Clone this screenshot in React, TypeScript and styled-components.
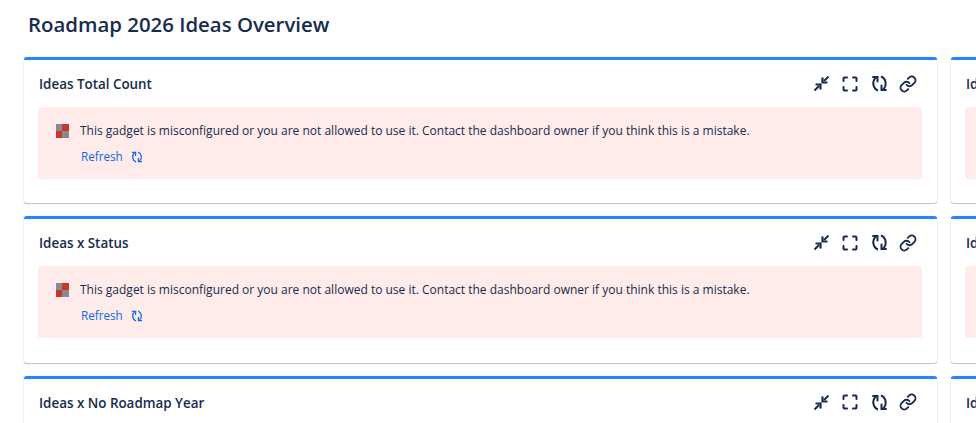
import React from 'react';
import styled, { createGlobalStyle } from 'styled-components';
import { Link } from 'lucide-react';

const GlobalStyle = createGlobalStyle`
  html, body {
    margin: 0;
    padding: 0;
    height: 100%;
    overflow: hidden;
    background: #fff;
    font-family: "Open Sans", "Noto Sans", "Liberation Sans", sans-serif;
    color: #172b4d;
  }
`;

const Page = styled.div`
  width: 976px;
  height: 423px;
  overflow: hidden;
  background: #fff;
`;

const Title = styled.h1`
  margin: 0;
  padding: 10px 0 0 28px;
  height: 57px;
  box-sizing: border-box;
  font-size: 20.4px;
  line-height: 28px;
  font-weight: 600;
  color: #172b4d;
  white-space: nowrap;
`;

const Grid = styled.div`
  display: grid;
  grid-template-columns: 913px 913px;
  column-gap: 14px;
  row-gap: 13.1px;
  padding-left: 24px;
`;

const Card = styled.section`
  height: 146.25px;
  box-sizing: border-box;
  background: #fff;
  border-top: 3px solid #2684ff;
  border-radius: 3px;
  box-shadow: 0 1px 1px rgba(9, 30, 66, 0.25), 0 0 1px rgba(9, 30, 66, 0.31);
  padding: 0 15px 0 14px;
`;

const CardHeader = styled.header`
  display: flex;
  align-items: center;
  justify-content: space-between;
  height: 47px;
  box-sizing: border-box;
`;

const CardTitle = styled.h2`
  margin: 1px 0 0 1px;
  font-size: 13.4px;
  font-weight: 600;
  color: #172b4d;
  white-space: nowrap;
`;

const Actions = styled.div`
  display: flex;
  align-items: center;
  gap: 11px;
  padding-right: 5px;
`;

const ActionButton = styled.span`
  display: flex;
  align-items: center;
  justify-content: center;
  width: 18px;
  height: 18px;
  color: #172b4d;
`;

const Alert = styled.div`
  display: flex;
  gap: 11px;
  height: 72px;
  box-sizing: border-box;
  padding: 15px 18px;
  background: #ffebe9;
  border-radius: 3px;
`;

const Message = styled.div`
  font-size: 12px;
  line-height: 17px;
  color: #172b4d;
`;

const RefreshLink = styled.a`
  display: flex;
  align-items: center;
  gap: 8px;
  margin: 9px 0 0 1px;
  font-size: 11.7px;
  color: #0b6be8;
`;

const BrokenIcon = styled.svg`
  flex: none;
  width: 13px;
  height: 14px;
  margin-top: 2px;
`;

const CompressIcon = () => (
  <svg width="17" height="17" viewBox="0 0 17 17" fill="none" stroke="currentColor" strokeWidth="2">
    <path d="M1.5 15.5L6 11" />
    <path d="M2.5 9.5H7.5V14.5" strokeWidth="2.2" />
    <path d="M15.5 1.5L11 6" />
    <path d="M9.5 2.5V7.5H14.5" strokeWidth="2.2" />
  </svg>
);

const ExpandIcon = () => (
  <svg width="16" height="16" viewBox="0 0 16 16" fill="none" stroke="currentColor" strokeWidth="2" strokeLinecap="round" strokeLinejoin="round">
    <path d="M1.5 5V2.5A1 1 0 0 1 2.5 1.5H5" />
    <path d="M11 1.5H13.5A1 1 0 0 1 14.5 2.5V5" />
    <path d="M14.5 11V13.5A1 1 0 0 1 13.5 14.5H11" />
    <path d="M5 14.5H2.5A1 1 0 0 1 1.5 13.5V11" />
  </svg>
);

const SyncIcon = ({ size, weight = 2 }: { size: number; weight?: number }) => (
  <svg width={size} height={size} viewBox="0 0 16 17" fill="none" stroke="currentColor" strokeWidth={weight}>
    <g>
      <path d="M6.5 15.5C1.5 13.5 0 6.5 4.5 2.5" />
      <path d="M0.8 2H6V7.2" />
    </g>
    <g transform="rotate(180 8 8.5)">
      <path d="M6.5 15.5C1.5 13.5 0 6.5 4.5 2.5" />
      <path d="M0.8 2H6V7.2" />
    </g>
  </svg>
);

const Gadget = ({ title }: { title: string }) => (
  <Card>
    <CardHeader>
      <CardTitle>{title}</CardTitle>
      <Actions>
        <ActionButton><CompressIcon /></ActionButton>
        <ActionButton><ExpandIcon /></ActionButton>
        <ActionButton><SyncIcon size={17} /></ActionButton>
        <ActionButton><Link size={18} strokeWidth={2.5} /></ActionButton>
      </Actions>
    </CardHeader>
    <Alert>
      <BrokenIcon viewBox="0 0 13 14">
        <rect x="0" y="0" width="6" height="7" fill="#8a8a8a" />
        <rect x="6" y="0" width="7" height="7" fill="#c9372c" />
        <rect x="0" y="7" width="6" height="7" fill="#c9372c" />
        <rect x="6" y="7" width="7" height="7" fill="#8a8a8a" />
      </BrokenIcon>
      <Message>
        This gadget is misconfigured or you are not allowed to use it. Contact the dashboard owner if you think this is a mistake.
        <RefreshLink>
          Refresh <SyncIcon size={12} weight={1.8} />
        </RefreshLink>
      </Message>
    </Alert>
  </Card>
);

const titles = ['Ideas Total Count', 'Ideas Total Count', 'Ideas x Status', 'Ideas x Status', 'Ideas x No Roadmap Year', 'Ideas x No Roadmap Year'];

export default function App() {
  return (
    <Page>
      <GlobalStyle />
      <Title>Roadmap 2026 Ideas Overview</Title>
      <Grid>
        {titles.map((title, i) => (
          <Gadget key={i} title={title} />
        ))}
      </Grid>
    </Page>
  );
}
